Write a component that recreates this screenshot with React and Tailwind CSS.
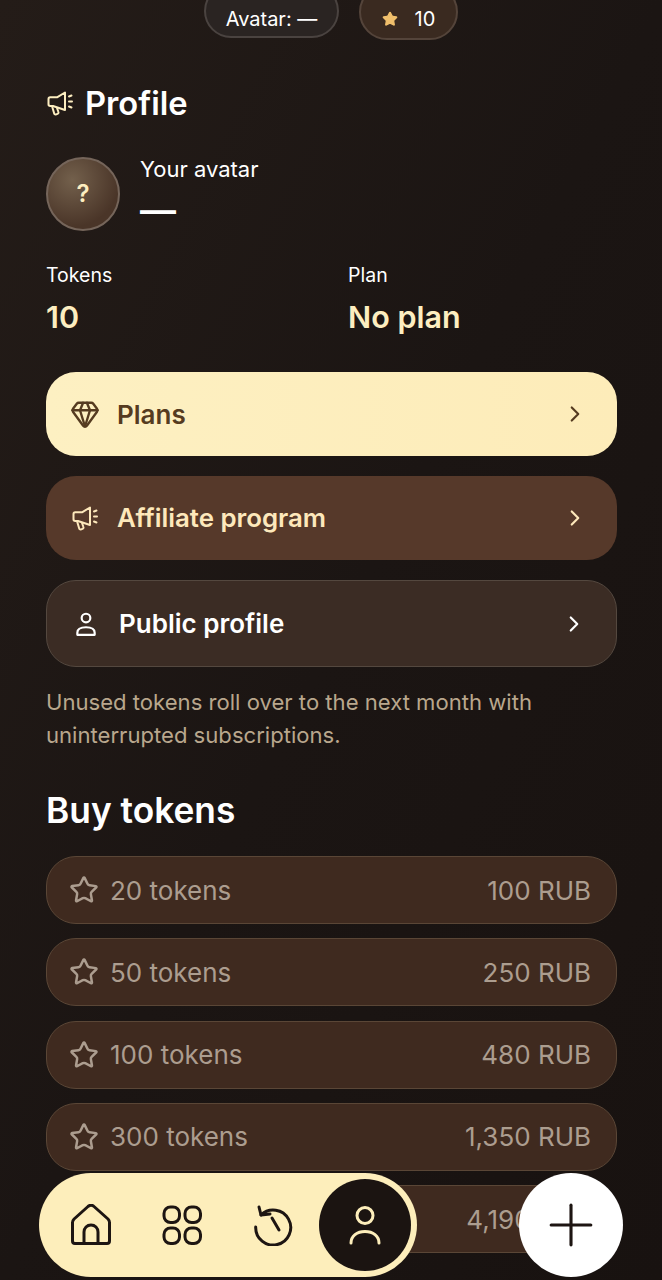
import React from 'react';
import { ChevronRight, Gem, Plus, Star } from 'lucide-react';

const packs = [
  { name: '20 tokens', price: '100 RUB' },
  { name: '50 tokens', price: '250 RUB' },
  { name: '100 tokens', price: '480 RUB' },
  { name: '300 tokens', price: '1,350 RUB' },
  { name: '1,000 tokens', price: '4,190 RUB' },
];

function MegaphoneIcon({ className }) {
  return (
    <svg viewBox="0 0 28 28" fill="none" stroke="currentColor" strokeWidth="2" strokeLinecap="round" strokeLinejoin="round" className={className}>
      <path d="M19 3.500v17.500L7 17H4.200c-1 0-1.700-.8-1.700-1.700V10c0-1 .7-1.700 1.700-1.700H11z" />
      <path d="M6 17l2.200 7.500c.3 1 1.200 1.200 2 .9l1.300-.5c.8-.3 1.200-1.100.9-1.900l-1.300-3.800" />
      <path d="M23 7.500l2.500-1M23 12.500h3M23 17.500l2.500 1" />
    </svg>
  );
}

function PersonIcon({ className }) {
  return (
    <svg viewBox="0 0 24 24" fill="none" stroke="currentColor" strokeWidth="2" strokeLinecap="round" strokeLinejoin="round" className={className}>
      <circle cx="12" cy="6.500" r="4" />
      <path d="M4 22v-2c0-3 3-5 8-5s8 2 8 5v2z" />
    </svg>
  );
}

export default function App() {
  return (
    <div className="relative h-[1280px] w-[662px] overflow-hidden bg-gradient-to-br from-[#241c18] via-[#1b1513] to-[#181210] font-['Inter','Noto_Sans',sans-serif] text-white">
      {/* status pills */}
      <div className="-mt-[16px] flex justify-center gap-5">
        <div className="flex h-[54px] w-[135px] items-center justify-center rounded-[27px] border-2 border-[#4a4340] bg-[#2a2422] pt-[16px] text-[20px] font-normal">
          Avatar: —
        </div>
        <div className="flex h-[56px] w-[99px] items-center justify-center gap-[17px] rounded-[28px] border-2 border-[#54443a] bg-[#3a2a20] pt-[14px] text-[20px] font-normal">
          <Star size={16} className="fill-[#f0bf6c] text-[#f0bf6c]" />
          <span>10</span>
        </div>
      </div>

      <div className="px-[46px]">
        {/* heading */}
        <div className="mt-[41px] flex h-[44px] items-center gap-[11px]">
          <MegaphoneIcon className="h-7 w-7 text-[#fdeec0]" />
          <h1 className="text-[32.700px] font-semibold leading-none">Profile</h1>
        </div>

        {/* avatar */}
        <div className="mt-[32px] flex items-start gap-[20px]">
          <div className="flex h-[74px] w-[74px] items-center justify-center rounded-full border-2 border-[#75655a] bg-[radial-gradient(circle_at_35%_30%,#73604c,#4a3528_70%)] text-[24px] font-semibold text-[#fdeec0]">
            ?
          </div>
          <div>
            <div className="text-[22px] leading-[24px]">Your avatar</div>
            <div className="mt-[11px] text-[36px] font-semibold leading-[36px]">—</div>
          </div>
        </div>

        {/* stats */}
        <div className="mt-[33px] grid grid-cols-[302px_1fr]">
          <div>
            <div className="text-[19.500px] leading-[22px]">Tokens</div>
            <div className="mt-[10px] text-[30.500px] font-semibold leading-[42px] text-[#fdeec0]">10</div>
          </div>
          <div>
            <div className="text-[19.500px] leading-[22px]">Plan</div>
            <div className="mt-[10px] text-[30.500px] font-semibold leading-[42px] text-[#fdeec0]">No plan</div>
          </div>
        </div>

        {/* menu */}
        <div className="mt-[34px] flex w-[571px] flex-col gap-5">
          <div className="flex h-[84px] items-center rounded-[30px] bg-gradient-to-r from-[#fdf0c2] to-[#fdecb9] pl-[24px] pr-[29px] text-[#553b20]">
            <Gem size={30} strokeWidth={1.900} />
            <span className="ml-[17px] flex-1 text-[26px] font-semibold">Plans</span>
            <ChevronRight size={26} />
          </div>
          <div className="flex h-[84px] items-center rounded-[30px] bg-[#56392a] pl-[25px] pr-[29px] text-[#fde8bb]">
            <MegaphoneIcon className="h-7 w-7" />
            <span className="ml-[18px] flex-1 text-[25.800px] font-semibold">Affiliate program</span>
            <ChevronRight size={26} />
          </div>
          <div className="flex h-[87px] items-center rounded-[30px] border-[1.500px] border-[#54483f] bg-[#3b2c24] pl-[26px] pr-[29px]">
            <PersonIcon className="h-[26px] w-[26px]" />
            <span className="ml-[20px] flex-1 text-[26px] font-semibold">Public profile</span>
            <ChevronRight size={26} />
          </div>
        </div>

        <p className="mt-[19px] text-[22.100px] leading-[33px] text-[#b9a78d]">
          Unused tokens roll over to the next month with uninterrupted subscriptions.
        </p>

        <h2 className="mt-[37px] text-[35.300px] font-semibold leading-[44px]">Buy tokens</h2>

        {/* token packs */}
        <div className="mt-[23px] flex w-[571px] flex-col gap-[14.250px]">
          {packs.map((p) => (
            <div key={p.name} className="flex h-[68px] items-center justify-between rounded-[30px] border-[1.500px] border-[#5a4636] bg-[#3f2a1f] pl-[22px] pr-[25px] text-[26px] text-[#ac9d8f]">
              <div className="flex items-center gap-[11px]">
                <Star size={30} strokeWidth={2} />
                <span>{p.name}</span>
              </div>
              <span>{p.price}</span>
            </div>
          ))}
        </div>
      </div>

      {/* bottom nav */}
      <div className="absolute bottom-[3px] left-[39px] flex h-[104px] w-[378px] items-center rounded-full bg-[#fdeebb] pl-[31px] text-[#1d1512]">
        <svg viewBox="0 0 42 42" fill="none" stroke="currentColor" strokeWidth="3" strokeLinecap="round" strokeLinejoin="round" className="h-[42px] w-[42px]">
          <path d="M2.500 37V18.500c0-1.500.6-2.500 1.600-3.500L18 2.500c1.800-1.500 4.300-1.500 6 0L38 15c1 1 1.500 2 1.500 3.500V37c0 1.500-1 2.500-2.500 2.500H5c-1.500 0-2.500-1-2.500-2.500z" />
          <path d="M14 39V28c0-4 3-7 7-7s7 3 7 7v11" />
        </svg>
        <svg viewBox="0 0 42 42" fill="none" stroke="currentColor" strokeWidth="3" className="ml-[49px] h-[42px] w-[42px]">
          <rect x="3" y="3" width="15.500" height="15.500" rx="6.500" />
          <rect x="24" y="3" width="15.500" height="15.500" rx="6.500" />
          <rect x="3" y="24" width="15.500" height="15.500" rx="6.500" />
          <rect x="24" y="24" width="15.500" height="15.500" rx="6.500" />
        </svg>
        <svg viewBox="0 0 42 42" fill="none" stroke="currentColor" strokeWidth="3" strokeLinecap="round" strokeLinejoin="round" className="ml-[49px] h-[42px] w-[42px]">
          <path d="M9 11A17.500 17.500 0 1 1 3.700 23" />
          <path d="M7 3l2 8 9-1" />
          <path d="M20 14l7 12" />
        </svg>
        <div className="ml-[25px] flex h-[92px] w-[92px] items-center justify-center rounded-full bg-[#1b1411] text-[#fdeebb]">
          <svg viewBox="0 0 42 42" fill="none" stroke="currentColor" strokeWidth="3" strokeLinecap="round" className="h-[42px] w-[42px]">
            <circle cx="21" cy="11.500" r="8" />
            <path d="M7 39C7 32 13 27.500 21 27.500S35 32 35 39" />
          </svg>
        </div>
      </div>

      <div className="absolute bottom-[3px] left-[519px] flex h-[104px] w-[104px] items-center justify-center rounded-full bg-white text-[#1d1512]">
        <Plus size={68} strokeWidth={1.100} />
      </div>
    </div>
  );
}
